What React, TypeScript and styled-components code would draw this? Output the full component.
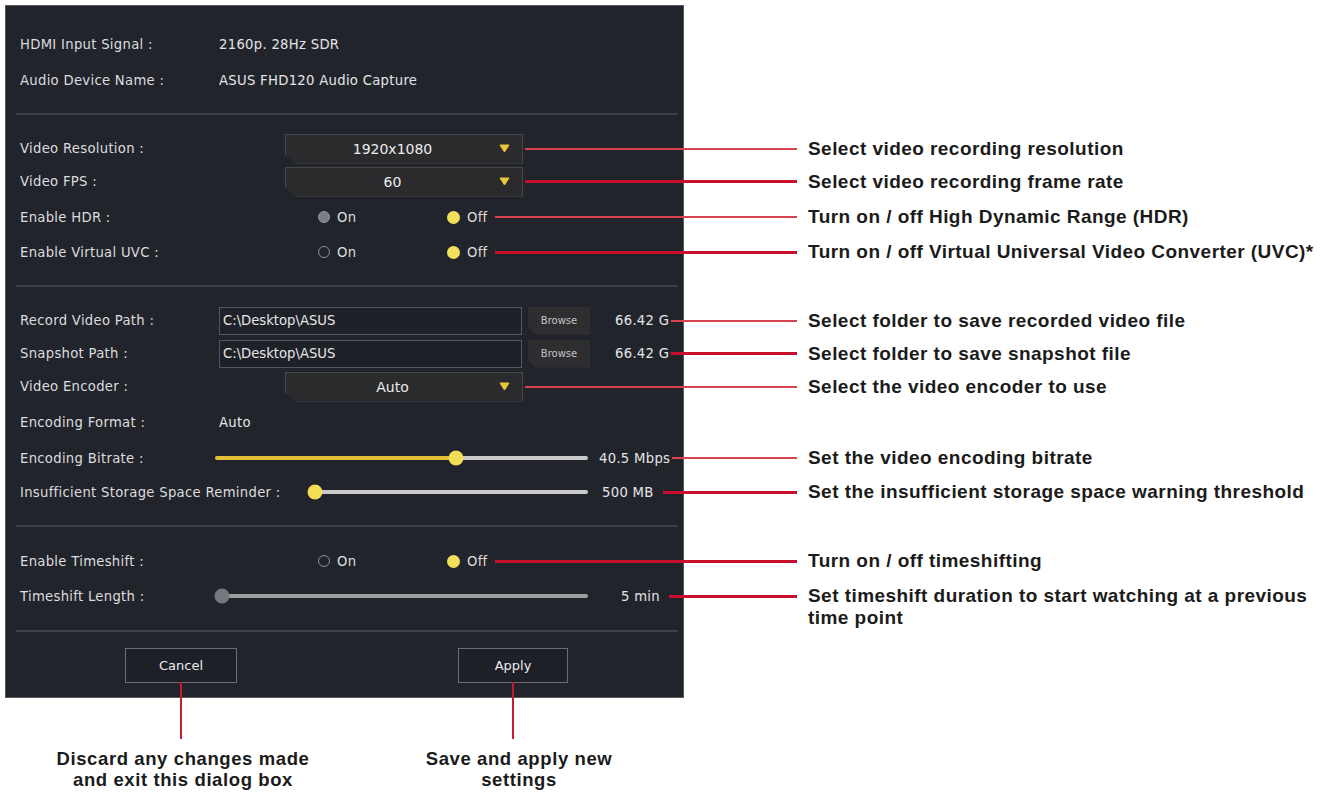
import React from "react";
import styled, { createGlobalStyle, css } from "styled-components";

const GlobalStyle = createGlobalStyle`
  html, body { margin: 0; background: #ffffff; }
  body { font-family: "DejaVu Sans", "Liberation Sans", sans-serif; }
`;

const Sheet = styled.div`
  display: flex;
  flex-direction: column;
  width: 1323px;
  padding: 5px 0 0 5px;
  box-sizing: border-box;
`;

const Line = styled.div<{ $h: number }>`
  display: flex;
  align-items: stretch;
  height: ${p => p.$h}px;
`;

const Panel = styled.div<{ $edge?: "top" | "bottom" }>`
  flex: 0 0 679px;
  box-sizing: border-box;
  display: flex;
  align-items: center;
  padding-left: 14px;
  background: #22242c;
  border-left: 1px solid #55585f;
  border-right: 1px solid #55585f;
  ${p => p.$edge === "top" && css`border-top: 1px solid #55585f;`}
  ${p => p.$edge === "bottom" && css`border-bottom: 1px solid #55585f;`}
  color: #dcdcde;
  font-family: "DejaVu Sans", "Liberation Sans", sans-serif;
  font-size: 13.2px;
  letter-spacing: 0.3px;
`;

const Rule = styled.div`
  flex: 1;
  height: 2px;
  margin: 0 5px 0 -4px;
  background: #3e414a;
`;

const Label = styled.span`
  flex: 0 0 195px;
  min-width: 0;
  white-space: nowrap;
`;

const Value = styled.span<{ $ml?: number }>`
  margin-left: ${p => p.$ml ?? 0}px;
  white-space: nowrap;
  color: #e4e4e6;
`;

const Leader = styled.div<{ $ml: number; $thick?: boolean }>`
  flex: 1;
  margin-left: ${p => p.$ml}px;
  margin-right: -114px;
  height: ${p => (p.$thick ? 3 : 2)}px;
  background: ${p => (p.$thick ? "#c8102e" : "#d8434f")};
`;

const Note = styled.div<{ $top?: number }>`
  align-self: ${p => (p.$top !== undefined ? "flex-start" : "center")};
  margin-top: ${p => p.$top ?? 0}px;
  padding-left: 124px;
  font-family: "Liberation Sans", Arial, sans-serif;
  font-weight: 700;
  font-size: 19px;
  letter-spacing: 0.45px;
  line-height: 22px;
  color: #1b1b1b;
  white-space: nowrap;
`;

const Select = styled.div<{ $ml: number }>`
  margin-left: ${p => p.$ml}px;
  width: 238px;
  height: 30px;
  box-sizing: border-box;
  display: flex;
  align-items: center;
  padding-right: 12px;
  background: #2b2b2d;
  border: 1px solid #46474b;
  clip-path: polygon(0 0, 100% 0, 100% 100%, 11px 100%, 0 calc(100% - 9px));
  color: #ececec;
  font-size: 14px;
  letter-spacing: 0;
`;

const SelectText = styled.span`
  flex: 1;
  text-align: center;
`;

const PathField = styled.div`
  margin-left: 4px;
  width: 303px;
  height: 28px;
  box-sizing: border-box;
  display: flex;
  align-items: center;
  padding-left: 3px;
  background: #1f2128;
  border: 1px solid #54565c;
  color: #e6e6e6;
  letter-spacing: 0;
`;

const Browse = styled.div`
  margin-left: 6px;
  width: 62px;
  height: 28px;
  display: flex;
  align-items: center;
  justify-content: center;
  background: #2e2e31;
  clip-path: polygon(0 0, 100% 0, 100% 100%, 8px 100%, 0 calc(100% - 7px));
  color: #c4c4c6;
  font-size: 10px;
  letter-spacing: 0;
`;

const Option = styled.span<{ $ml?: number; $w?: number }>`
  display: inline-flex;
  align-items: center;
  gap: 7px;
  margin-left: ${p => p.$ml ?? 0}px;
  ${p => p.$w && css`width: ${p.$w}px;`}
  color: #dcdcde;
`;

const Dot = styled.span<{ $state: "on" | "off" | "muted" }>`
  box-sizing: border-box;
  border-radius: 50%;
  ${p =>
    p.$state === "on"
      ? css`width: 13px; height: 13px; background: #f2df5c;`
      : p.$state === "muted"
      ? css`width: 12px; height: 12px; background: #7c7d82; border: 1.5px solid #96979b;`
      : css`width: 12px; height: 12px; border: 1.5px solid #8f9095;`}
`;

const Slider = styled.div<{ $ml: number; $w: number }>`
  position: relative;
  flex-shrink: 0;
  margin-left: ${p => p.$ml}px;
  width: ${p => p.$w}px;
  height: 16px;
  display: flex;
  align-items: center;
`;

const Track = styled.div`
  flex: 1;
  height: 4px;
  border-radius: 2px;
`;

const Knob = styled.span<{ $muted?: boolean }>`
  position: absolute;
  top: 50%;
  width: 15px;
  height: 15px;
  border-radius: 50%;
  transform: translate(-50%, -50%);
  background: ${p => (p.$muted ? "#76777c" : "#f2dd55")};
`;

const ActionButton = styled.button<{ $ml: number; $w: number }>`
  position: relative;
  margin-left: ${p => p.$ml}px;
  width: ${p => p.$w}px;
  height: 35px;
  padding: 0;
  box-sizing: border-box;
  background: #1e2027;
  border: 1px solid #6b6d73;
  color: #ececec;
  font-family: "DejaVu Sans", "Liberation Sans", sans-serif;
  font-size: 13px;
  &::after {
    content: "";
    position: absolute;
    left: 50%;
    top: 100%;
    width: 2px;
    height: 57px;
    margin-left: -1px;
    background: #c41b2f;
  }
`;

const Captions = styled.div`
  display: flex;
  gap: 66px;
  margin-top: 50px;
  padding-left: 28px;
`;

const Caption = styled.div<{ $w: number }>`
  width: ${p => p.$w}px;
  text-align: center;
  font-family: "Liberation Sans", Arial, sans-serif;
  font-weight: 700;
  font-size: 18.5px;
  letter-spacing: 0.6px;
  line-height: 21px;
  color: #1b1b1b;
`;

function Arrow() {
  return (
    <svg width="11" height="9" viewBox="0 0 11 9">
      <path d="M1 1h9L5.5 8z" fill="#ecc63a" stroke="#ecc63a" strokeLinejoin="round" />
    </svg>
  );
}

function Gap({ h, edge }: { h: number; edge?: "top" | "bottom" }) {
  return (
    <Line $h={h}>
      <Panel $edge={edge} />
    </Line>
  );
}

function Divider() {
  return (
    <Line $h={2}>
      <Panel>
        <Rule />
      </Panel>
    </Line>
  );
}

function Row({ h, note, top, children }: { h: number; note?: React.ReactNode; top?: number; children: React.ReactNode }) {
  return (
    <Line $h={h}>
      <Panel>{children}</Panel>
      {note && <Note $top={top}>{note}</Note>}
    </Line>
  );
}

function Bar({ ml, w, pct, muted }: { ml: number; w: number; pct: number; muted?: boolean }) {
  const rest = muted ? "#9d9ea1" : "#c9c9cb";
  return (
    <Slider $ml={ml} $w={w}>
      <Track style={{ background: `linear-gradient(to right, #e5c13a ${pct}%, ${rest} ${pct}%)` }} />
      <Knob $muted={muted} style={{ left: `${pct}%` }} />
    </Slider>
  );
}

export default function App() {
  return (
    <>
      <GlobalStyle />
      <Sheet>
        <Gap h={22} edge="top" />
        <Row h={35}>
          <Label>HDMI Input Signal :</Label>
          <Value $ml={4}>2160p. 28Hz SDR</Value>
        </Row>
        <Row h={37}>
          <Label>Audio Device Name :</Label>
          <Value $ml={4}>ASUS FHD120 Audio Capture</Value>
        </Row>
        <Gap h={14} />
        <Divider />
        <Gap h={17} />

        <Row h={33} note="Select video recording resolution">
          <Label>Video Resolution :</Label>
          <Select $ml={70}>
            <SelectText>1920x1080</SelectText>
            <Arrow />
          </Select>
          <Leader $ml={2} />
        </Row>
        <Row h={33} note="Select video recording frame rate">
          <Label>Video FPS :</Label>
          <Select $ml={70}>
            <SelectText>60</SelectText>
            <Arrow />
          </Select>
          <Leader $ml={2} $thick />
        </Row>
        <Row h={38} note="Turn on / off High Dynamic Range (HDR)">
          <Label>Enable HDR :</Label>
          <Option $ml={103} $w={129}>
            <Dot $state="muted" />
            On
          </Option>
          <Option>
            <Dot $state="on" />
            Off
          </Option>
          <Leader $ml={7} />
        </Row>
        <Row h={32} note="Turn on / off Virtual Universal Video Converter (UVC)*">
          <Label>Enable Virtual UVC :</Label>
          <Option $ml={103} $w={129}>
            <Dot $state="off" />
            On
          </Option>
          <Option>
            <Dot $state="on" />
            Off
          </Option>
          <Leader $ml={7} $thick />
        </Row>
        <Gap h={17} />
        <Divider />
        <Gap h={17} />

        <Row h={33} note="Select folder to save recorded video file">
          <Label>Record Video Path :</Label>
          <PathField>C:\Desktop\ASUS</PathField>
          <Browse>Browse</Browse>
          <Value $ml={25}>66.42 G</Value>
          <Leader $ml={2} />
        </Row>
        <Row h={33} note="Select folder to save snapshot file">
          <Label>Snapshot Path :</Label>
          <PathField>C:\Desktop\ASUS</PathField>
          <Browse>Browse</Browse>
          <Value $ml={25}>66.42 G</Value>
          <Leader $ml={2} $thick />
        </Row>
        <Row h={33} note="Select the video encoder to use">
          <Label>Video Encoder :</Label>
          <Select $ml={70}>
            <SelectText>Auto</SelectText>
            <Arrow />
          </Select>
          <Leader $ml={2} />
        </Row>
        <Row h={38}>
          <Label>Encoding Format :</Label>
          <Value $ml={4}>Auto</Value>
        </Row>
        <Row h={34} note="Set the video encoding bitrate">
          <Label>Encoding Bitrate :</Label>
          <Bar ml={0} w={373} pct={64.6} />
          <Value $ml={11}>40.5 Mbps</Value>
          <Leader $ml={2} />
        </Row>
        <Row h={34} note="Set the insufficient storage space warning threshold">
          <Label>Insufficient Storage Space Reminder :</Label>
          <Bar ml={100} w={273} pct={0} />
          <Value $ml={14}>500 MB</Value>
          <Leader $ml={9} $thick />
        </Row>
        <Gap h={16} />
        <Divider />
        <Gap h={17} />

        <Row h={34} note="Turn on / off timeshifting">
          <Label>Enable Timeshift :</Label>
          <Option $ml={103} $w={129}>
            <Dot $state="off" />
            On
          </Option>
          <Option>
            <Dot $state="on" />
            Off
          </Option>
          <Leader $ml={7} $thick />
        </Row>
        <Row
          h={36}
          top={7}
          note={
            <>
              Set timeshift duration to start watching at a previous
              <br />
              time point
            </>
          }
        >
          <Label>Timeshift Length :</Label>
          <Bar ml={7} w={366} pct={0} muted />
          <Value $ml={33}>5 min</Value>
          <Leader $ml={9} $thick />
        </Row>
        <Gap h={16} />
        <Divider />
        <Gap h={16} />
        <Row h={35}>
          <ActionButton $ml={105} $w={112}>Cancel</ActionButton>
          <ActionButton $ml={221} $w={110}>Apply</ActionButton>
        </Row>
        <Gap h={15} edge="bottom" />

        <Captions>
          <Caption $w={300}>
            Discard any changes made
            <br />
            and exit this dialog box
          </Caption>
          <Caption $w={240}>
            Save and apply new
            <br />
            settings
          </Caption>
        </Captions>
      </Sheet>
    </>
  );
}
